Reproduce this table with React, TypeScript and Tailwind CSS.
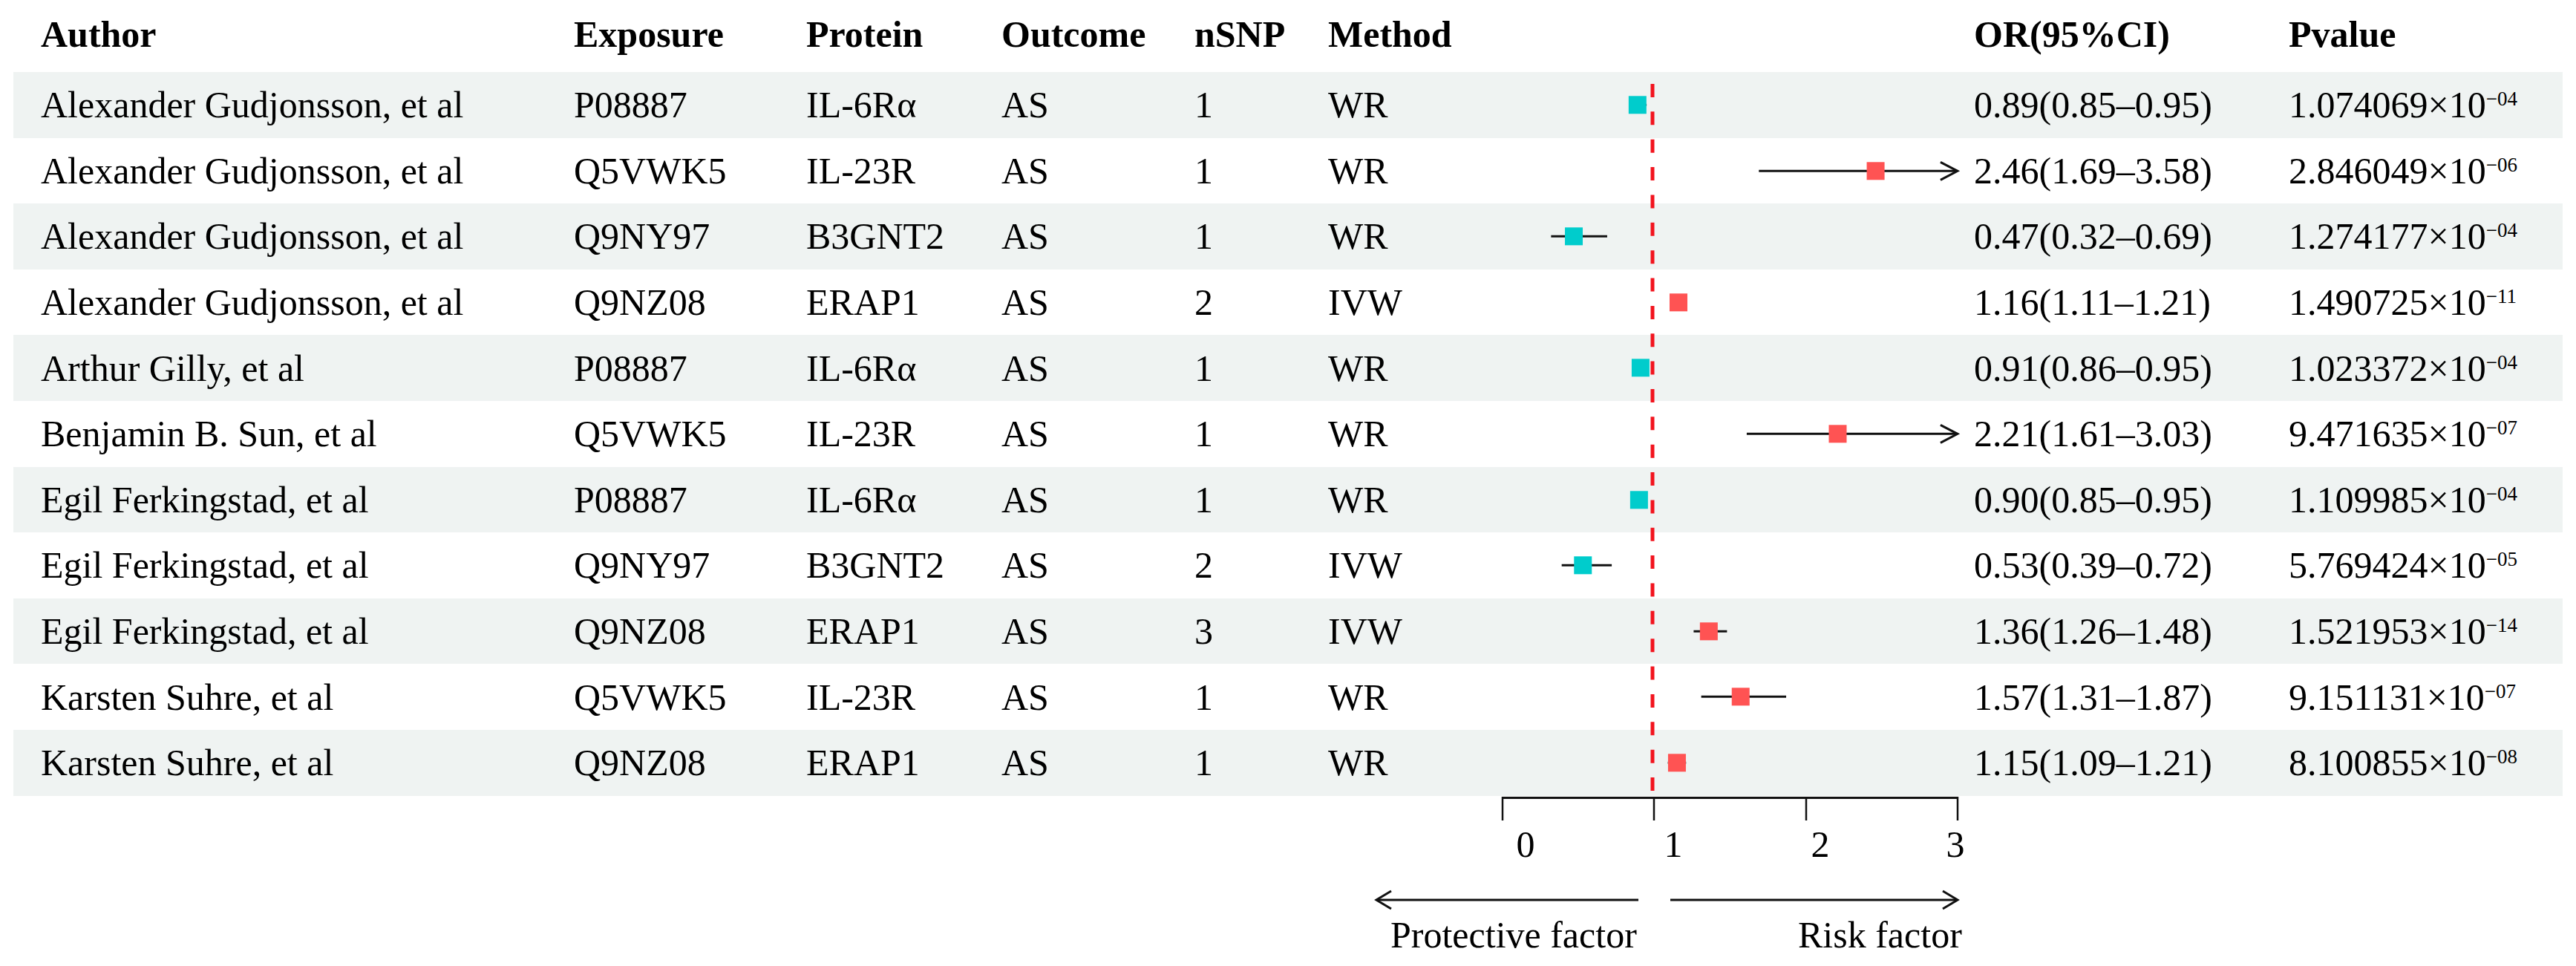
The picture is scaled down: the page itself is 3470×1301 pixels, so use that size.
import React from 'react';

type Row = {
  author: string;
  exposure: string;
  protein: string;
  outcome: string;
  nsnp: string;
  method: string;
  or: number;
  lo: number;
  hi: number;
  p: string;
  pexp: string;
};

const rows: Row[] = [
  { author: 'Alexander Gudjonsson, et al', exposure: 'P08887', protein: 'IL-6Rα', outcome: 'AS', nsnp: '1', method: 'WR', or: 0.89, lo: 0.85, hi: 0.95, p: '1.074069', pexp: '04' },
  { author: 'Alexander Gudjonsson, et al', exposure: 'Q5VWK5', protein: 'IL-23R', outcome: 'AS', nsnp: '1', method: 'WR', or: 2.46, lo: 1.69, hi: 3.58, p: '2.846049', pexp: '06' },
  { author: 'Alexander Gudjonsson, et al', exposure: 'Q9NY97', protein: 'B3GNT2', outcome: 'AS', nsnp: '1', method: 'WR', or: 0.47, lo: 0.32, hi: 0.69, p: '1.274177', pexp: '04' },
  { author: 'Alexander Gudjonsson, et al', exposure: 'Q9NZ08', protein: 'ERAP1', outcome: 'AS', nsnp: '2', method: 'IVW', or: 1.16, lo: 1.11, hi: 1.21, p: '1.490725', pexp: '11' },
  { author: 'Arthur Gilly, et al', exposure: 'P08887', protein: 'IL-6Rα', outcome: 'AS', nsnp: '1', method: 'WR', or: 0.91, lo: 0.86, hi: 0.95, p: '1.023372', pexp: '04' },
  { author: 'Benjamin B. Sun, et al', exposure: 'Q5VWK5', protein: 'IL-23R', outcome: 'AS', nsnp: '1', method: 'WR', or: 2.21, lo: 1.61, hi: 3.03, p: '9.471635', pexp: '07' },
  { author: 'Egil Ferkingstad, et al', exposure: 'P08887', protein: 'IL-6Rα', outcome: 'AS', nsnp: '1', method: 'WR', or: 0.9, lo: 0.85, hi: 0.95, p: '1.109985', pexp: '04' },
  { author: 'Egil Ferkingstad, et al', exposure: 'Q9NY97', protein: 'B3GNT2', outcome: 'AS', nsnp: '2', method: 'IVW', or: 0.53, lo: 0.39, hi: 0.72, p: '5.769424', pexp: '05' },
  { author: 'Egil Ferkingstad, et al', exposure: 'Q9NZ08', protein: 'ERAP1', outcome: 'AS', nsnp: '3', method: 'IVW', or: 1.36, lo: 1.26, hi: 1.48, p: '1.521953', pexp: '14' },
  { author: 'Karsten Suhre, et al', exposure: 'Q5VWK5', protein: 'IL-23R', outcome: 'AS', nsnp: '1', method: 'WR', or: 1.57, lo: 1.31, hi: 1.87, p: '9.151131', pexp: '07' },
  { author: 'Karsten Suhre, et al', exposure: 'Q9NZ08', protein: 'ERAP1', outcome: 'AS', nsnp: '1', method: 'WR', or: 1.15, lo: 1.09, hi: 1.21, p: '8.100855', pexp: '08' },
];

// plot column: 704px wide, value 0 sits 69px in, one unit = 204.3px
const X0 = 69;
const UNIT = 204.3;
const xOf = (v: number) => X0 + Math.min(v, 3) * UNIT;
const ROW_H = 88.6;

function CiMark({ or, lo, hi }: { or: number; lo: number; hi: number }) {
  const cy = ROW_H / 2;
  const x1 = xOf(lo);
  const x2 = xOf(hi);
  const xm = xOf(or);
  const fill = or < 1 ? '#00cccc' : '#ff5353';
  return (
    <svg width={704} height={ROW_H} className="block">
      <line x1={x1} x2={x2} y1={cy} y2={cy} stroke="#111" strokeWidth={3} />
      {hi > 3 && (
        <polyline
          points={`${x2 - 23},${cy - 12} ${x2},${cy} ${x2 - 23},${cy + 12}`}
          fill="none"
          stroke="#111"
          strokeWidth={3}
        />
      )}
      <rect x={xm - 12} y={cy - 12} width={24} height={24} fill={fill} />
    </svg>
  );
}

function Cells({ r }: { r: Row }) {
  return (
    <>
      <div className="w-[718px] shrink-0">{r.author}</div>
      <div className="w-[313px] shrink-0">{r.exposure}</div>
      <div className="w-[263px] shrink-0">{r.protein}</div>
      <div className="w-[260px] shrink-0">{r.outcome}</div>
      <div className="w-[180px] shrink-0">{r.nsnp}</div>
      <div className="w-[166px] shrink-0">{r.method}</div>
      <div className="w-[704px] shrink-0 self-stretch">
        <CiMark or={r.or} lo={r.lo} hi={r.hi} />
      </div>
      <div className="w-[424px] shrink-0">
        {r.or.toFixed(2)}({r.lo.toFixed(2)}–{r.hi.toFixed(2)})
      </div>
      <div className="flex-1">
        {r.p}×10<sup className="text-[27px] -top-4">−{r.pexp}</sup>
      </div>
    </>
  );
}

export default function App() {
  return (
    <div className="w-[3470px] h-[1301px] bg-white text-black font-['Liberation_Serif','Times_New_Roman',serif] text-[50px] leading-none">
      <div className="ml-[18px] w-[3434px]">
        <div className="flex items-center h-[97px] pl-[37px] pb-[5px] font-bold">
          <div className="w-[718px] shrink-0">Author</div>
          <div className="w-[313px] shrink-0">Exposure</div>
          <div className="w-[263px] shrink-0">Protein</div>
          <div className="w-[260px] shrink-0">Outcome</div>
          <div className="w-[180px] shrink-0">nSNP</div>
          <div className="w-[166px] shrink-0">Method</div>
          <div className="w-[704px] shrink-0" />
          <div className="w-[424px] shrink-0">OR(95%CI)</div>
          <div className="flex-1">Pvalue</div>
        </div>

        <div className="relative">
          {rows.map((r, i) => (
            <div
              key={i}
              className={`flex items-center h-[88.6px] pl-[37px] ${i % 2 === 0 ? 'bg-[#eff3f2]' : 'bg-white'}`}
            >
              <Cells r={r} />
            </div>
          ))}
          {/* reference line at OR = 1 */}
          <svg width={6} height={975} className="absolute left-[2205px] top-0">
            <line x1={3} x2={3} y1={16} y2={968} stroke="#f2141e" strokeWidth={5} strokeDasharray="18 19.36" />
          </svg>
        </div>

        <div className="ml-[1802px] w-[840px]">
          <svg width={840} height={155} className="block">
            <line x1={204} x2={817} y1={2.5} y2={2.5} stroke="#111" strokeWidth={3} />
            <line x1={204} x2={204} y1={1} y2={33} stroke="#111" strokeWidth={2.5} />
            <line x1={408} x2={408} y1={1} y2={33} stroke="#111" strokeWidth={2.5} />
            <line x1={613} x2={613} y1={1} y2={33} stroke="#111" strokeWidth={2.5} />
            <line x1={817} x2={817} y1={1} y2={33} stroke="#111" strokeWidth={2.5} />
            <g fontFamily="'Liberation Serif', serif" fontSize={50} textAnchor="middle" fill="#000">
              <text x={235} y={82}>0</text>
              <text x={434} y={82}>1</text>
              <text x={632} y={82}>2</text>
              <text x={814} y={82}>3</text>
            </g>
            <line x1={34} x2={387} y1={140} y2={140} stroke="#111" strokeWidth={3} />
            <polyline points="54,128 34,140 54,152" fill="none" stroke="#111" strokeWidth={3} />
            <line x1={430} x2={816} y1={140} y2={140} stroke="#111" strokeWidth={3} />
            <polyline points="797,128 817,140 797,152" fill="none" stroke="#111" strokeWidth={3} />
          </svg>
          <div className="flex mt-[7px] pl-[53px]">
            <div className="w-[549px] shrink-0">Protective factor</div>
            <div>Risk factor</div>
          </div>
        </div>
      </div>
    </div>
  );
}
